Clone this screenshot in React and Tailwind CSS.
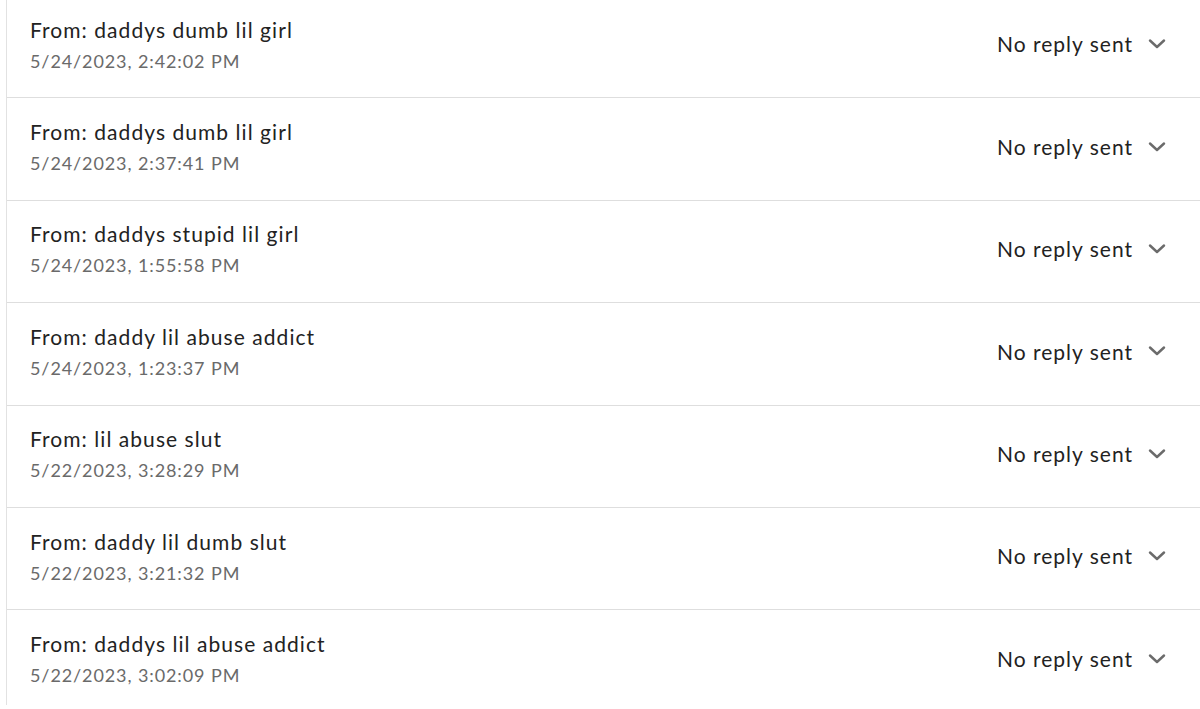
import React from "react";

const rows = [
  ["daddys dumb lil girl", "5/24/2023, 2:42:02 PM"],
  ["daddys dumb lil girl", "5/24/2023, 2:37:41 PM"],
  ["daddys stupid lil girl", "5/24/2023, 1:55:58 PM"],
  ["daddy lil abuse addict", "5/24/2023, 1:23:37 PM"],
  ["lil abuse slut", "5/22/2023, 3:28:29 PM"],
  ["daddy lil dumb slut", "5/22/2023, 3:21:32 PM"],
  ["daddys lil abuse addict", "5/22/2023, 3:02:09 PM"],
];

function Chevron() {
  return (
    <svg width="18" height="10" viewBox="0 0 18 10" fill="none">
      <path d="M2 1.5 L9 8 L16 1.5" stroke="#6b6b6b" strokeWidth="2.4" strokeLinecap="round" strokeLinejoin="round" />
    </svg>
  );
}

export default function App() {
  return (
    <div className="w-[1200px] h-[709px] overflow-hidden bg-white pl-[6px]" style={{ fontFamily: "Lato, 'Open Sans', sans-serif" }}>
      <div className="h-full border-l border-[#e2e2e2] -mt-[4px]">
        {rows.map(([name, date], i) => (
          <div key={i} className="h-[102.4px] border-b border-[#dedede] flex items-center justify-between pl-[23px] pr-[34px]">
            <div className="flex flex-col pb-[4px]">
              <div className="text-[21px] leading-[28px] tracking-[1.05px] text-[#222222]">From: {name}</div>
              <div className="text-[18px] leading-[26px] tracking-[0.9px] text-[#6a6a6a] mt-[4px]">{date}</div>
            </div>
            <div className="flex items-center gap-[15px] pb-[5px]">
              <span className="text-[21px] tracking-[1px] text-[#222222]">No reply sent</span>
              <Chevron />
            </div>
          </div>
        ))}
      </div>
    </div>
  );
}
